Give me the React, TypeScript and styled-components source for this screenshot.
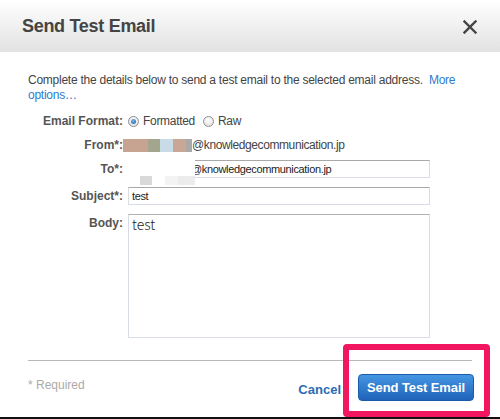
import React from "react";
import styled, { createGlobalStyle } from "styled-components";

const GlobalStyle = createGlobalStyle`
  html, body { margin: 0; padding: 0; background: #fff; }
  body { font-family: "Liberation Sans", Arial, sans-serif; color: #444; }
  * { box-sizing: border-box; }
`;

const Dialog = styled.div`
  position: relative;
  width: 500px;
  height: 419px;
  display: flex;
  flex-direction: column;
  background: #fff;
  border-bottom: 2px solid #111;
  overflow: hidden;
`;

const Header = styled.div`
  height: 52px;
  flex: none;
  display: flex;
  align-items: center;
  justify-content: space-between;
  padding: 1px 23px 0 22px;
  background: linear-gradient(#ffffff 0%, #f3f3f3 40%, #e2e2e2 100%);
`;

const Title = styled.h1`
  margin: 0;
  font-size: 18px;
  font-weight: bold;
  color: #444;
  letter-spacing: -0.3px;
`;

const Close = styled.button`
  border: 0;
  background: none;
  padding: 0;
  width: 14px;
  height: 14px;
  display: flex;
  align-items: center;
  justify-content: center;
  cursor: pointer;
`;

const Body = styled.div`
  padding: 21px 28px 0 28px;
  flex: 1;
  display: flex;
  flex-direction: column;
`;

const Intro = styled.p`
  margin: 0;
  font-size: 12px;
  line-height: 15px;
  letter-spacing: -0.25px;
  color: #444;
`;

const Link = styled.a`
  color: #2e7bcf;
  text-decoration: none;
`;

const Form = styled.div`
  display: flex;
  flex-direction: column;
`;

const Row = styled.div<{ $mt: number; $h: number; $top?: boolean }>`
  display: grid;
  grid-template-columns: 95px 302px;
  column-gap: 5px;
  margin-top: ${(p) => p.$mt}px;
  height: ${(p) => p.$h}px;
  align-items: ${(p) => (p.$top ? "start" : "center")};
  position: relative;
`;

const Label = styled.label<{ $pt?: number }>`
  text-align: right;
  font-size: 12px;
  font-weight: bold;
  color: #555;
  padding-top: ${(p) => p.$pt ?? 0}px;
`;

const Value = styled.div`
  display: flex;
  align-items: center;
  font-size: 12px;
  color: #444;
  letter-spacing: -0.3px;
`;

const Radio = styled.span<{ $on?: boolean }>`
  width: 11px;
  height: 11px;
  border-radius: 50%;
  border: 1px solid #8f8f8f;
  background: radial-gradient(circle at 50% 35%, #ffffff, #dcdcdc);
  display: inline-flex;
  align-items: center;
  justify-content: center;
  margin-right: 4px;
  &::after {
    content: "";
    display: ${(p) => (p.$on ? "block" : "none")};
    width: 5px;
    height: 5px;
    border-radius: 50%;
    background: radial-gradient(circle at 40% 35%, #6fb7f0, #1d5fa8);
  }
`;

const RadioLabel = styled.span`
  margin-right: 8px;
  font-size: 12px;
`;

const Blur = styled.span<{ $c: string; $w: number }>`
  display: inline-block;
  width: ${(p) => p.$w}px;
  height: 13px;
  background: ${(p) => p.$c};
`;

const FromValue = styled(Value)`
  margin-left: -5px;
  letter-spacing: -0.4px;
`;

const Input = styled.input<{ $pl?: number }>`
  width: 302px;
  height: 18px;
  border: 1px solid #d8dce4;
  border-top-color: #a9a9a9;
  padding: 0 3px 0 ${(p) => p.$pl ?? 3}px;
  font-family: "Liberation Sans", Arial, sans-serif;
  font-size: 11px;
  letter-spacing: -0.35px;
  color: #222;
  background: #fff;
  outline: none;
`;

const TextArea = styled.textarea`
  width: 302px;
  height: 124px;
  border: 1px solid #d8dce4;
  border-top-color: #b3b3b3;
  padding: 1px 3px;
  font-family: "Noto Sans CJK JP", "DejaVu Sans", sans-serif;
  font-size: 14px;
  font-weight: 300;
  line-height: 16px;
  color: #222;
  resize: none;
  outline: none;
`;

const Mask = styled.div`
  position: absolute;
  left: 97px;
  top: -2px;
  width: 70px;
  height: 28px;
  background: #fff;
`;

const MaskBlock = styled.span<{ $x: number; $w: number; $c: string }>`
  position: absolute;
  left: ${(p) => p.$x}px;
  top: 18px;
  width: ${(p) => p.$w}px;
  height: 9px;
  background: ${(p) => p.$c};
`;

const Divider = styled.hr`
  margin: 22px 0 0 0;
  border: 0;
  border-top: 1px solid #b8b8b8;
  height: 0;
`;

const Footer = styled.div`
  display: flex;
  align-items: center;
  justify-content: space-between;
  padding-top: 13px;
`;

const Required = styled.span`
  font-size: 12px;
  color: #aaa;
  margin-top: -6px;
`;

const Actions = styled.div`
  display: flex;
  align-items: center;
  gap: 17px;
  margin-right: -2px;
`;

const Cancel = styled.a`
  font-size: 13px;
  font-weight: bold;
  color: #2b6cb5;
  margin-top: 3px;
`;

const Primary = styled.button`
  width: 116px;
  height: 27px;
  border: 1px solid #1a5aa8;
  border-radius: 4px;
  background: linear-gradient(#4596e2, #1f63ba);
  color: #fff;
  font-family: "Liberation Sans", Arial, sans-serif;
  font-size: 13px;
  font-weight: bold;
  letter-spacing: -0.1px;
  padding: 0;
`;

const Highlight = styled.div`
  position: absolute;
  left: 343px;
  top: 344px;
  width: 147px;
  height: 73px;
  border: 6px solid #f2155f;
  border-radius: 4px;
  pointer-events: none;
`;

export default function App() {
  return (
    <>
      <GlobalStyle />
      <Dialog>
        <Header>
          <Title>Send Test Email</Title>
          <Close aria-label="close">
            <svg width="14" height="14" viewBox="0 0 14 14">
              <path d="M1.5 1.5 L12.5 12.5 M12.5 1.5 L1.5 12.5" stroke="#444" strokeWidth="2.4" strokeLinecap="square" />
            </svg>
          </Close>
        </Header>
        <Body>
          <Intro>
            Complete the details below to send a test email to the selected email address.&nbsp; <Link href="#">More options…</Link>
          </Intro>
          <Form>
            <Row $mt={9} $h={18}>
              <Label>Email Format:</Label>
              <Value>
                <Radio $on />
                <RadioLabel>Formatted</RadioLabel>
                <Radio />
                <RadioLabel>Raw</RadioLabel>
              </Value>
            </Row>
            <Row $mt={6} $h={18}>
              <Label>From*:</Label>
              <FromValue>
                <Blur $c="#c6a491" $w={25} />
                <Blur $c="#a4a58f" $w={12} />
                <Blur $c="#c7dce6" $w={13} />
                <Blur $c="#c9a797" $w={13} />
                <Blur $c="#a9a9aa" $w={6} />
                <span>@knowledgecommunication.jp</span>
              </FromValue>
            </Row>
            <Row $mt={6} $h={18}>
              <Label>To*:</Label>
              <Input defaultValue="@knowledgecommunication.jp" $pl={62} readOnly />
              <Mask>
                <MaskBlock $x={15} $w={12} $c="#d9d9d9" />
                <MaskBlock $x={40} $w={13} $c="#f3f3f3" />
                <MaskBlock $x={53} $w={17} $c="#ececec" />
              </Mask>
            </Row>
            <Row $mt={9} $h={18}>
              <Label>Subject*:</Label>
              <Input defaultValue="test" readOnly />
            </Row>
            <Row $mt={9} $h={124} $top>
              <Label $pt={2}>Body:</Label>
              <TextArea defaultValue="test" readOnly />
            </Row>
          </Form>
          <Divider />
          <Footer>
            <Required>* Required</Required>
            <Actions>
              <Cancel>Cancel</Cancel>
              <Primary>Send Test Email</Primary>
            </Actions>
          </Footer>
        </Body>
        <Highlight />
      </Dialog>
    </>
  );
}
